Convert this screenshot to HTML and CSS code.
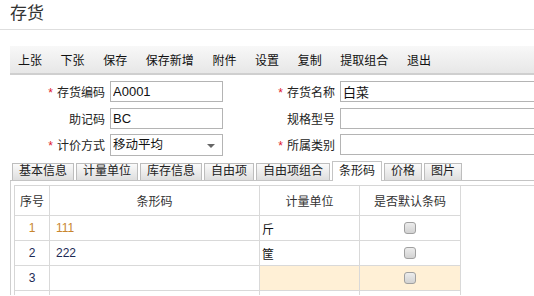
FILE: index.html
```html
<!DOCTYPE html>
<html lang="zh-CN">
<head>
    <meta charset="UTF-8">
    <title>存货</title>
    <link rel="stylesheet" href="styles.css">
</head>
<body>
    <div class="page-title">存货</div>
    <div class="toolbar">
        <span class="tool">上张</span>
        <span class="tool">下张</span>
        <span class="tool">保存</span>
        <span class="tool">保存新增</span>
        <span class="tool">附件</span>
        <span class="tool">设置</span>
        <span class="tool">复制</span>
        <span class="tool">提取组合</span>
        <span class="tool">退出</span>
    </div>
    <div class="form">
        <div class="form-row">
            <label class="label req">存货编码</label>
            <input class="input" type="text" value="A0001">
            <label class="label label-right req">存货名称</label>
            <input class="input input-wide" type="text" value="白菜">
        </div>
        <div class="form-row">
            <label class="label">助记码</label>
            <input class="input" type="text" value="BC">
            <label class="label label-right">规格型号</label>
            <input class="input input-wide" type="text" value="">
        </div>
        <div class="form-row">
            <label class="label req">计价方式</label>
            <div class="input select">移动平均<span class="arrow"></span></div>
            <label class="label label-right req">所属类别</label>
            <input class="input input-wide" type="text" value="">
        </div>
    </div>
    <div class="tabs">
        <span class="tab">基本信息</span>
        <span class="tab">计量单位</span>
        <span class="tab">库存信息</span>
        <span class="tab">自由项</span>
        <span class="tab">自由项组合</span>
        <span class="tab active">条形码</span>
        <span class="tab">价格</span>
        <span class="tab">图片</span>
    </div>
    <div class="tab-body">
        <div class="grid">
            <div class="grid-row head">
                <div class="cell">序号</div>
                <div class="cell">条形码</div>
                <div class="cell">计量单位</div>
                <div class="cell">是否默认条码</div>
            </div>
            <div class="grid-row first">
                <div class="cell num">1</div>
                <div class="cell text">111</div>
                <div class="cell unit">斤</div>
                <div class="cell"><span class="check"></span></div>
            </div>
            <div class="grid-row">
                <div class="cell num">2</div>
                <div class="cell text">222</div>
                <div class="cell unit">筐</div>
                <div class="cell"><span class="check"></span></div>
            </div>
            <div class="grid-row editing">
                <div class="cell num">3</div>
                <div class="cell text"></div>
                <div class="cell unit"></div>
                <div class="cell"><span class="check"></span></div>
            </div>
            <div class="grid-row">
                <div class="cell num"></div>
                <div class="cell text"></div>
                <div class="cell unit"></div>
                <div class="cell"></div>
            </div>
        </div>
    </div>
</body>
</html>
```

FILE: styles.css
```css
html, body {
    margin: 0;
    overflow: hidden;
}
body {
    width: 534px;
    height: 296px;
    background: #fff;
    font-family: "Liberation Sans", "Noto Sans CJK SC", sans-serif;
    font-size: 12px;
    color: #222;
}
.page-title {
    height: 29px;
    line-height: 27px;
    padding-left: 10px;
    font-size: 17px;
    color: #333;
    border-bottom: 1px solid #dedede;
}
.toolbar {
    display: flex;
    gap: 18.6px;
    align-items: center;
    margin: 16px 0 0 10px;
    padding-left: 8px;
    height: 27px;
    background: linear-gradient(to bottom, #f8f8f8, #e7e7e7);
    border-bottom: 2px solid #cfcfcf;
}
.tool {
    color: #111;
    cursor: pointer;
}
.form {
    display: flex;
    flex-direction: column;
    gap: 5.5px;
    margin-top: 6px;
}
.form-row {
    display: flex;
    align-items: center;
    height: 21px;
}
.label {
    flex-shrink: 0;
    width: 105px;
    text-align: right;
    color: #222;
}
.label-right {
    width: 112px;
}
.req::before {
    content: "*";
    color: #e0182d;
    margin-right: 4px;
}
.input {
    flex-shrink: 0;
    box-sizing: border-box;
    width: 113px;
    height: 21px;
    margin-left: 5px;
    padding: 0 2px;
    border: 1px solid #b4b4b4;
    font-family: "Liberation Sans", "Noto Sans CJK SC", sans-serif;
    font-size: 13px;
    color: #111;
    background: #fff;
    outline: none;
}
.input-wide {
    width: 210px;
}
.select {
    position: relative;
    width: 113px;
    height: 22px;
    line-height: 20px;
    font-size: 12.5px;
}
.arrow {
    position: absolute;
    right: 7px;
    top: 9px;
    border-left: 4px solid transparent;
    border-right: 4px solid transparent;
    border-top: 4px solid #666;
}
.tabs {
    display: flex;
    align-items: flex-end;
    gap: 2px;
    height: 19px;
    margin: 6px 0 0 10px;
    padding-left: 2px;
    border-bottom: 1px solid #c4c4c4;
}
.tab {
    box-sizing: border-box;
    height: 17px;
    line-height: 15px;
    padding: 0 6px;
    border: 1px solid #bdbdbd;
    border-bottom: none;
    background: linear-gradient(to bottom, #fafafa, #dedede);
    color: #222;
}
.tab.active {
    height: 20px;
    line-height: 18px;
    margin-bottom: -1px;
    background: #fff;
    border-color: #c4c4c4;
}
.tab-body {
    margin-left: 10px;
    padding: 4px 0 0 3px;
    border-left: 1px solid #cfcfcf;
    height: 110px;
    overflow: hidden;
}
.grid {
    border-top: 1px solid #d6d6d6;
    border-left: 1px solid #d6d6d6;
}
.grid-row {
    display: grid;
    grid-template-columns: 35px 210px 100px 101px;
    height: 25px;
}
.grid-row.head {
    height: 30px;
}
.cell {
    box-sizing: border-box;
    display: flex;
    align-items: center;
    justify-content: center;
    border-right: 1px solid #d9d9d9;
    border-bottom: 1px solid #d9d9d9;
    color: #222;
}
.head .cell {
    color: #333;
}
.cell.num {
    color: #1c2a55;
}
.cell.text {
    justify-content: flex-start;
    padding-left: 6px;
    color: #1c2a55;
}
.cell.unit {
    justify-content: flex-start;
    padding-left: 2px;
    color: #111;
}
.first .num,
.first .text {
    color: #c8862e;
}
.editing .cell:nth-child(3),
.editing .cell:nth-child(4) {
    background: #fff0d6;
}
.check {
    box-sizing: border-box;
    width: 12px;
    height: 12px;
    border: 1px solid #a0a0a0;
    border-radius: 3px;
    background: linear-gradient(to bottom, #ececec, #d2d2d2);
}
```
